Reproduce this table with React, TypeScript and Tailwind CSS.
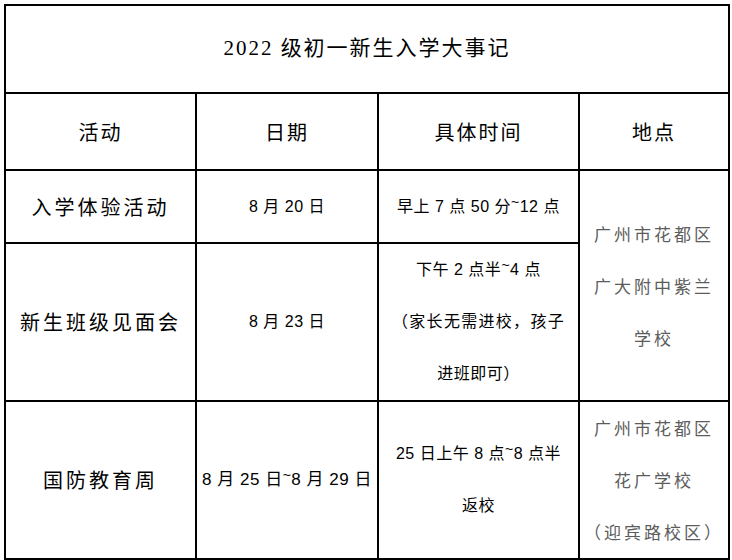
const cjk = '"Noto Sans CJK SC", sans-serif';

const serif = { fontFamily: '"Liberation Serif", "Noto Sans CJK SC", serif' };

function Tilde() {
  return <span className="relative -top-[5px] text-[14px]">~</span>;
}

export default function App() {
  const cell = 'border-2 border-black text-center align-middle p-0';
  const activity = 'text-[20px] tracking-[3px] text-black';
  const body = 'text-[16px] text-black tracking-[0.5px] font-["Liberation_Sans","Noto_Sans_CJK_SC",sans-serif]';
  const place = 'text-[17px] tracking-[3px] text-[#5c5c5c] leading-[52px]';

  return (
    <div className="w-[732px] h-[560px] bg-white pt-[4px] pl-[4px]" style={{ fontFamily: cjk }}>
      <table className="table-fixed border-collapse w-[724px]">
        <colgroup>
          <col className="w-[191px]" />
          <col className="w-[182px]" />
          <col className="w-[201px]" />
          <col className="w-[150px]" />
        </colgroup>
        <tbody>
          <tr className="h-[88px]">
            <td colSpan={4} className={`${cell} text-[21px] tracking-[2px] text-black`} style={serif}>
              2022 级初一新生入学大事记
            </td>
          </tr>
          <tr className="h-[77px]">
            <td className={`${cell} text-[20px] tracking-[2px]`}>活动</td>
            <td className={`${cell} text-[20px] tracking-[2px]`}>日期</td>
            <td className={`${cell} text-[20px] tracking-[2px]`}>具体时间</td>
            <td className={`${cell} text-[20px] tracking-[2px]`}>地点</td>
          </tr>
          <tr className="h-[73px]">
            <td className={`${cell} ${activity}`}>入学体验活动</td>
            <td className={`${cell} ${body}`}>8 月 20 日</td>
            <td className={`${cell} ${body}`}>
              早上 7 点 50 分<Tilde />12 点
            </td>
            <td rowSpan={2} className={`${cell} ${place}`}>
              <div>广州市花都区</div>
              <div>广大附中紫兰</div>
              <div>学校</div>
            </td>
          </tr>
          <tr className="h-[156px]">
            <td className={`${cell} ${activity}`}>新生班级见面会</td>
            <td className={`${cell} ${body}`}>8 月 23 日</td>
            <td className={`${cell} ${body} leading-[52px]`}>
              <div>下午 2 点半<Tilde />4 点</div>
              <div className="tracking-[1.3px]">（家长无需进校，孩子</div>
              <div>进班即可）</div>
            </td>
          </tr>
          <tr className="h-[155px]">
            <td className={`${cell} ${activity}`}>国防教育周</td>
            <td className={`${cell} ${body} tracking-[0.3px] text-[17px]`}>
              8 月 25 日<Tilde />8 月 29 日
            </td>
            <td className={`${cell} ${body} leading-[52px]`}>
              <div>25 日上午 8 点<Tilde />8 点半</div>
              <div>返校</div>
            </td>
            <td className={`${cell} ${place}`}>
              <div>广州市花都区</div>
              <div>花广学校</div>
              <div>（迎宾路校区）</div>
            </td>
          </tr>
        </tbody>
      </table>
    </div>
  );
}
